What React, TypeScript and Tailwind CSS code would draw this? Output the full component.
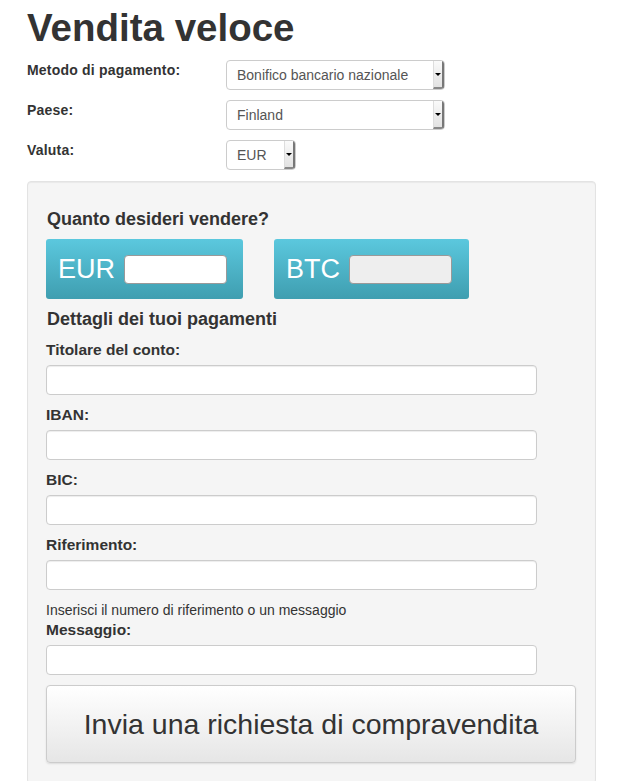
import React from "react";

const font = { fontFamily: '"Liberation Sans", Arial, sans-serif' };

const FakeSelect: React.FC<{ value: string; w: string }> = ({ value, w }) => (
  <div className={`${w} h-[30px] flex rounded-[4px] border border-[#ccc] bg-white overflow-hidden`}>
    <div className="flex-1 pl-[10px] flex items-center text-[14px] text-[#555]">{value}</div>
    <div className="w-[11px] flex items-center justify-center bg-gradient-to-b from-[#fafafa] to-[#e2e2e2] border-l border-[#ddd] border-r-2 border-r-[#777] border-b-2 border-b-[#888]">
      <span className="w-0 h-0 border-l-[3px] border-r-[3px] border-t-[3px] border-l-transparent border-r-transparent border-t-black" />
    </div>
  </div>
);

const Field: React.FC<{ label: string }> = ({ label }) => (
  <div>
    <div className="text-[15.5px] font-bold text-[#333] leading-[20px] mb-[5px]">{label}</div>
    <div className="w-[491px] h-[30px] rounded-[4px] border border-[#ccc] bg-white shadow-[inset_0_1px_1px_rgba(0,0,0,0.075)]" />
  </div>
);

const CurrencyBox: React.FC<{ code: string; disabled?: boolean }> = ({ code, disabled }) => (
  <div className="h-[60px] rounded-[3px] bg-gradient-to-b from-[#5bc8de] to-[#3f9eb0] flex items-center pl-[12px] pr-[14px] gap-[9px]">
    <span className="text-[27px] text-white leading-none">{code}</span>
    <div
      className={`w-[103px] h-[29px] rounded-[4px] border border-[#999] ${disabled ? "bg-[#eee]" : "bg-white"}`}
    />
  </div>
);

export default function App() {
  return (
    <div className="min-h-screen bg-white px-[27px] pt-[6px] text-[#333]" style={font}>
      <h1 className="text-[38.5px] font-bold leading-[44px] text-[#333]">Vendita veloce</h1>

      <div className="mt-[10px] flex flex-col gap-[10px]">
        <div className="flex">
          <div className="w-[199px] text-[14px] tracking-[0.2px] font-bold">Metodo di pagamento:</div>
          <FakeSelect value="Bonifico bancario nazionale" w="w-[219px]" />
        </div>
        <div className="flex">
          <div className="w-[199px] text-[14px] tracking-[0.2px] font-bold">Paese:</div>
          <FakeSelect value="Finland" w="w-[219px]" />
        </div>
        <div className="flex">
          <div className="w-[199px] text-[14px] tracking-[0.2px] font-bold">Valuta:</div>
          <FakeSelect value="EUR" w="w-[70px]" />
        </div>
      </div>

      <div className="mt-[11px] w-[569px] rounded-[4px] border border-[#e3e3e3] bg-[#f5f5f5] px-[18px] pt-[27px] pb-[20px] shadow-[inset_0_1px_1px_rgba(0,0,0,0.05)]">
        <h3 className="pl-[1px] text-[18px] font-bold leading-[20px]">Quanto desideri vendere?</h3>
        <div className="mt-[10px] flex gap-[31px]">
          <div className="w-[197px]">
            <CurrencyBox code="EUR" />
          </div>
          <div className="w-[195px]">
            <CurrencyBox code="BTC" disabled />
          </div>
        </div>
        <h3 className="mt-[10px] pl-[1px] text-[18px] font-bold leading-[20px]">Dettagli dei tuoi pagamenti</h3>
        <div className="mt-[11px] flex flex-col gap-[10px]">
          <Field label="Titolare del conto:" />
          <Field label="IBAN:" />
          <Field label="BIC:" />
          <Field label="Riferimento:" />
        </div>
        <div className="mt-[10px] text-[14px] leading-[20px] text-[#333]">
          Inserisci il numero di riferimento o un messaggio
        </div>
        <div>
          <div className="text-[15.5px] font-bold leading-[20px] mb-[5px]">Messaggio:</div>
          <div className="w-[491px] h-[30px] rounded-[4px] border border-[#ccc] bg-white" />
        </div>
        <button className="mt-[10px] w-[530px] h-[78px] rounded-[4px] border border-[#ccc] bg-gradient-to-b from-white to-[#e6e6e6] text-[28.5px] text-[#333] shadow-[0_1px_2px_rgba(0,0,0,0.1)]">
          Invia una richiesta di compravendita
        </button>
      </div>
    </div>
  );
}
